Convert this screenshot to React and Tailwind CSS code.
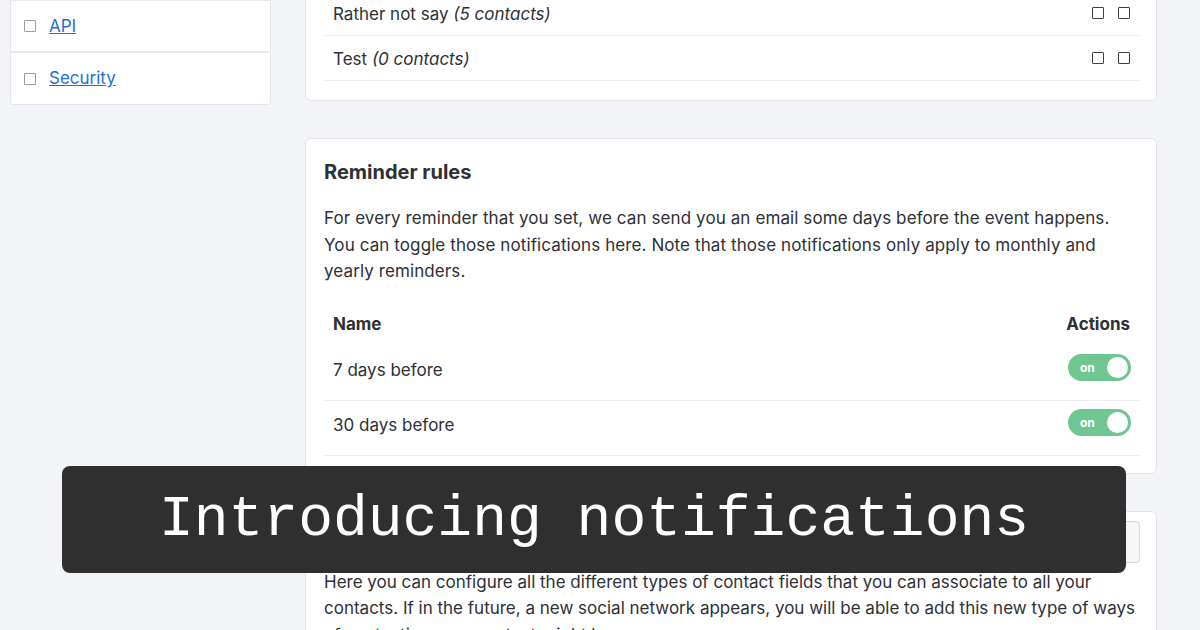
import React from "react";

const font = { fontFamily: "Inter, 'Noto Sans', sans-serif" };

function Box({ dark }) {
  return (
    <span
      className={
        dark
          ? "inline-block w-[12px] h-[12px] border-[1.5px] border-[#3d4146] rounded-[1px] bg-white"
          : "inline-block w-[12px] h-[12px] border-[1.5px] border-[#9a9a9a] rounded-[1px] bg-white"
      }
    />
  );
}

function Toggle() {
  return (
    <div className="w-[63px] h-[27px] rounded-full bg-[#6fc690] flex items-center justify-between pl-[12px] pr-[3px]">
      <span className="text-white text-[12px] font-bold leading-none">on</span>
      <span className="w-[21px] h-[21px] rounded-full bg-white" />
    </div>
  );
}

export default function App() {
  return (
    <div
      className="relative w-[1200px] h-[630px] overflow-hidden bg-[#f2f4f8] text-[#2d3035]"
      style={font}
    >
      <div className="flex items-start pl-[10px] gap-[34px]">
        {/* Sidebar */}
        <div className="w-[261px] -mt-[58px] bg-white border border-[#e3e6ea] rounded-b-[3px]">
          <div className="h-[58px] border-b-2 border-[#e8eaed]" />
          <div className="h-[52px] flex items-center gap-[13px] pl-[13px] border-b-2 border-[#e8eaed]">
            <Box />
            <a href="#" className="text-[#1b6fd8] underline text-[17px] leading-none">API</a>
          </div>
          <div className="h-[51px] flex items-center gap-[13px] pl-[13px]">
            <Box />
            <a href="#" className="text-[#1b6fd8] underline text-[17px] leading-none">Security</a>
          </div>
        </div>

        {/* Main column */}
        <div className="w-[852px] flex flex-col gap-[37px]">
          {/* Card 1 */}
          <div className="-mt-[40px] bg-white border border-[#e1e4e8] rounded-[6px] pl-[18px] pr-[16px] pb-[19px]">
            <div className="h-[30px] border-b border-[#eceef0]" />
            <div className="h-[45px] flex items-center justify-between pl-[9px] pr-[10px] pt-[4px] border-b border-[#eceef0]">
              <span className="text-[17px]">Rather not say <i>(5 contacts)</i></span>
              <span className="flex gap-[14px] -mt-[4px]"><Box dark /><Box dark /></span>
            </div>
            <div className="h-[45px] flex items-center justify-between pl-[9px] pr-[10px] pt-[4px] border-b border-[#eceef0]">
              <span className="text-[17px]">Test <i>(0 contacts)</i></span>
              <span className="flex gap-[14px] -mt-[4px]"><Box dark /><Box dark /></span>
            </div>
          </div>

          {/* Card 2 */}
          <div className="bg-white border border-[#e1e4e8] rounded-[6px] pl-[18px] pr-[16px] pt-[20px] pb-[17px]">
            <h2 className="text-[20px] font-bold leading-[26px]">Reminder rules</h2>
            <p className="mt-[20px] text-[17px] leading-[26.5px] tracking-[0.1px] whitespace-nowrap">
              For every reminder that you set, we can send you an email some days before the event happens.
              <br />
              You can toggle those notifications here. Note that those notifications only apply to monthly and
              <br />
              yearly reminders.
            </p>
            <div className="mt-[19px] h-[42px] flex items-center justify-between pl-[9px] pr-[10px] font-bold text-[17px]">
              <span>Name</span>
              <span>Actions</span>
            </div>
            <div className="h-[55px] flex items-center justify-between pl-[9px] pr-[9px] border-b border-[#eceef0]">
              <span className="text-[17px] -mt-[3px]">7 days before</span>
              <span className="-mt-[10px]"><Toggle /></span>
            </div>
            <div className="h-[55px] flex items-center justify-between pl-[9px] pr-[9px] border-b border-[#eceef0]">
              <span className="text-[17px] -mt-[3px]">30 days before</span>
              <span className="-mt-[10px]"><Toggle /></span>
            </div>
          </div>

          {/* Card 3 */}
          <div className="bg-white border border-[#e1e4e8] rounded-[6px] pl-[18px] pr-[16px] pt-[9px] pb-[19px]">
            <div className="flex items-center justify-between">
              <h2 className="text-[20px] font-bold leading-[26px]">Contact field types</h2>
              <button className="h-[42px] px-[14px] border border-[#d5d9de] rounded-[4px] bg-[#f6f7f9] text-[15px]">
                Add a new field type
              </button>
            </div>
            <p className="mt-[6px] text-[17px] leading-[26.5px] whitespace-nowrap">
              Here you can configure all the different types of contact fields that you can associate to all your
              <br />
              contacts. If in the future, a new social network appears, you will be able to add this new type of ways
              <br />
              of contacting your contacts right here.
            </p>
          </div>
        </div>
      </div>

      {/* Overlay banner */}
      <div className="absolute left-[62px] top-[466px] w-[1064px] h-[107px] rounded-[8px] bg-[#2f2f2f] flex items-center justify-center">
        <span
          className="text-white text-[58px] leading-none"
          style={{ fontFamily: "'Liberation Mono', 'DejaVu Sans Mono', monospace" }}
        >
          Introducing notifications
        </span>
      </div>
    </div>
  );
}
